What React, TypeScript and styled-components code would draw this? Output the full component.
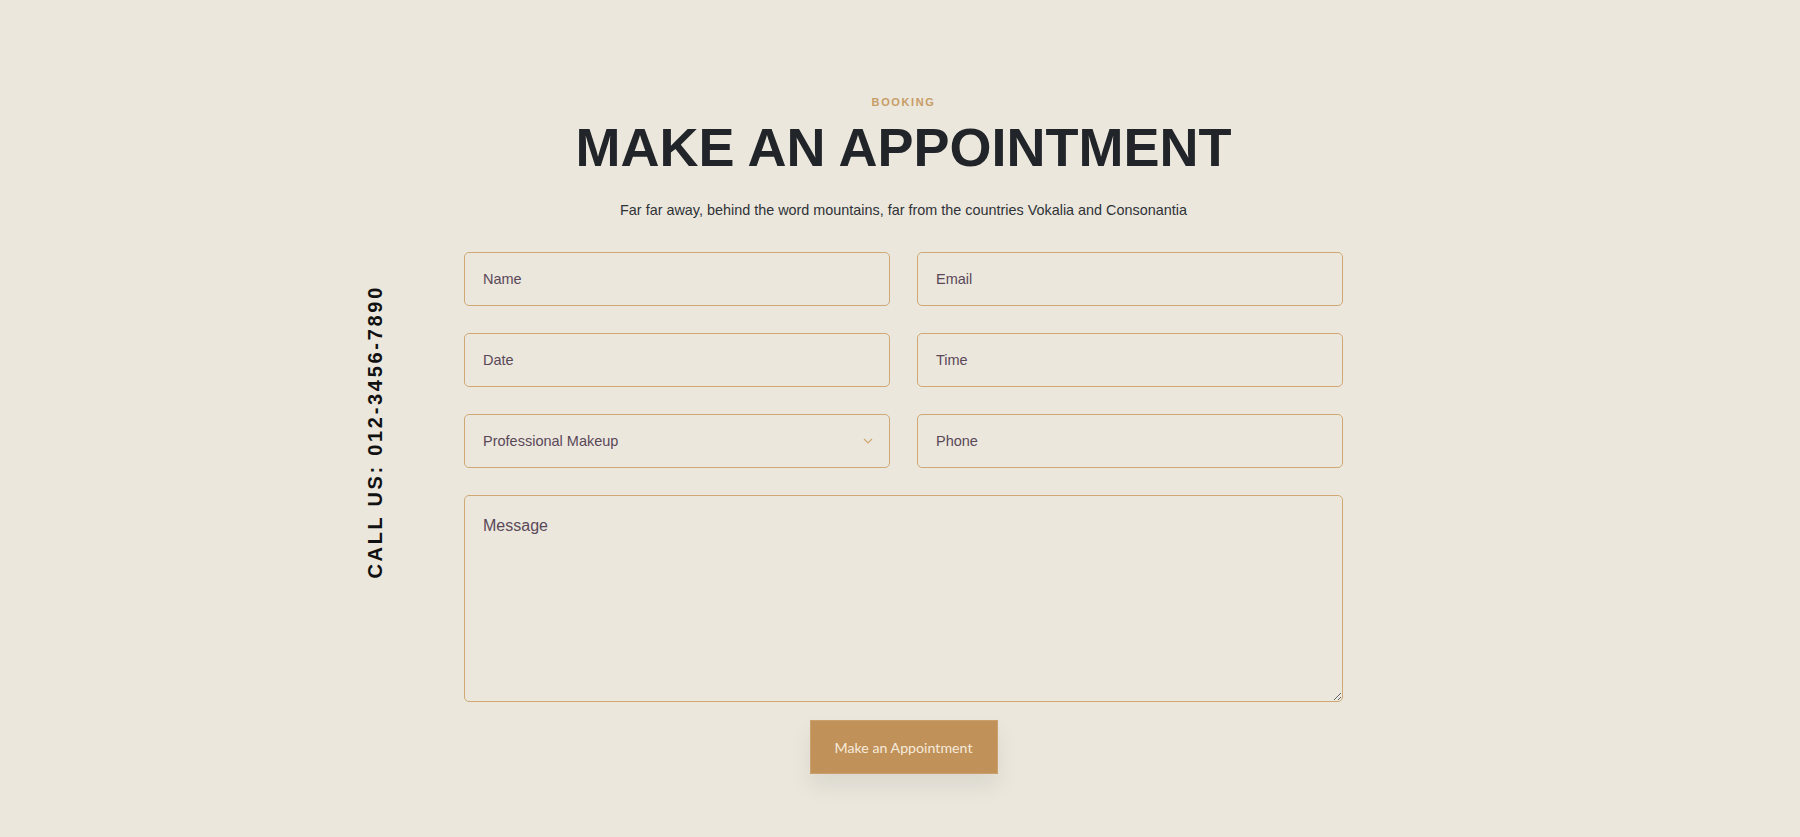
import React from 'react';
import styled, { createGlobalStyle } from 'styled-components';

const GlobalStyle = createGlobalStyle`
  html, body {
    margin: 0;
    padding: 0;
    background: #ebe7dd;
  }
  body {
    font-family: "Liberation Sans", Arial, sans-serif;
  }
  * {
    box-sizing: border-box;
  }
`;

const Section = styled.section`
  display: grid;
  grid-template-columns: 1fr 879px 1fr;
  padding: 94px 0 40px 7px;
  min-height: 837px;
`;

const Heading = styled.header`
  grid-column: 2;
  grid-row: 1;
  display: flex;
  flex-direction: column;
  align-items: center;
  text-align: center;
`;

const Eyebrow = styled.span`
  font-size: 11px;
  line-height: 1.5;
  font-weight: 700;
  letter-spacing: 1.6px;
  text-transform: uppercase;
  color: #c79c66;
`;

const Title = styled.h2`
  margin: 4px 0 0;
  font-size: 54px;
  line-height: 1.2;
  font-weight: 700;
  color: #212529;
  white-space: nowrap;
`;

const Lead = styled.p`
  margin: 21px 0 0;
  font-size: 14.4px;
  line-height: 1.5;
  color: #2f3237;
`;

const CallUs = styled.div`
  grid-column: 1;
  grid-row: 2;
  justify-self: end;
  align-self: start;
  margin: 41px 79px 0 0;
  writing-mode: vertical-rl;
  transform: rotate(180deg);
  font-size: 20px;
  line-height: 1;
  font-weight: 700;
  letter-spacing: 2.7px;
  color: #111;
  white-space: nowrap;
`;

const Form = styled.form`
  grid-column: 2;
  grid-row: 2;
  margin-top: 8px;
  display: flex;
  flex-direction: column;
  align-items: center;
`;

const Fields = styled.div`
  width: 100%;
  display: grid;
  grid-template-columns: 1fr 1fr;
  gap: 27px;
`;

const fieldBase = `
  width: 100%;
  border: 1px solid #d0a873;
  border-radius: 5px;
  background: transparent;
  font-family: "Liberation Sans", Arial, sans-serif;
  color: #5a4858;
  outline: none;
  &::placeholder {
    color: #5a4858;
    opacity: 1;
  }
`;

const Input = styled.input`
  ${fieldBase}
  height: 54px;
  padding: 0 18px;
  font-size: 14.5px;
`;

const SelectWrap = styled.div`
  position: relative;
`;

const Select = styled.select`
  ${fieldBase}
  height: 54px;
  padding: 0 18px;
  font-size: 14.5px;
  appearance: none;
  -webkit-appearance: none;
`;

const Chevron = styled.svg`
  position: absolute;
  right: 17px;
  top: 50%;
  width: 10px;
  height: 6px;
  margin-top: -3px;
  pointer-events: none;
`;

const Message = styled.textarea`
  ${fieldBase}
  grid-column: 1 / -1;
  height: 207px;
  padding: 18px;
  font-size: 16px;
  line-height: 1.5;
  resize: both;
`;

const Submit = styled.button`
  margin-top: 18px;
  width: 188px;
  height: 54px;
  border: 1px solid #c9a06c;
  border-radius: 0;
  background: #c09159;
  color: #f6eadb;
  font-family: Lato, "Open Sans", sans-serif;
  font-size: 14.2px;
  cursor: pointer;
  box-shadow: 0 12px 22px rgba(0, 0, 0, 0.07);
`;

const App = () => {
  return (
    <>
      <GlobalStyle />
      <Section>
        <Heading>
          <Eyebrow>Booking</Eyebrow>
          <Title>MAKE AN APPOINTMENT</Title>
          <Lead>Far far away, behind the word mountains, far from the countries Vokalia and Consonantia</Lead>
        </Heading>
        <CallUs>CALL US: 012-3456-7890</CallUs>
        <Form onSubmit={(e) => e.preventDefault()}>
          <Fields>
            <Input type="text" placeholder="Name" />
            <Input type="text" placeholder="Email" />
            <Input type="text" placeholder="Date" />
            <Input type="text" placeholder="Time" />
            <SelectWrap>
              <Select defaultValue="makeup">
                <option value="makeup">Professional Makeup</option>
                <option value="hair">Hair Styling</option>
                <option value="nails">Nail Care</option>
              </Select>
              <Chevron viewBox="0 0 10 6">
                <polyline points="1,1 5,5 9,1" fill="none" stroke="#d0a873" strokeWidth="1.2" />
              </Chevron>
            </SelectWrap>
            <Input type="text" placeholder="Phone" />
            <Message placeholder="Message" />
          </Fields>
          <Submit type="submit">Make an Appointment</Submit>
        </Form>
      </Section>
    </>
  );
};

export default App;
